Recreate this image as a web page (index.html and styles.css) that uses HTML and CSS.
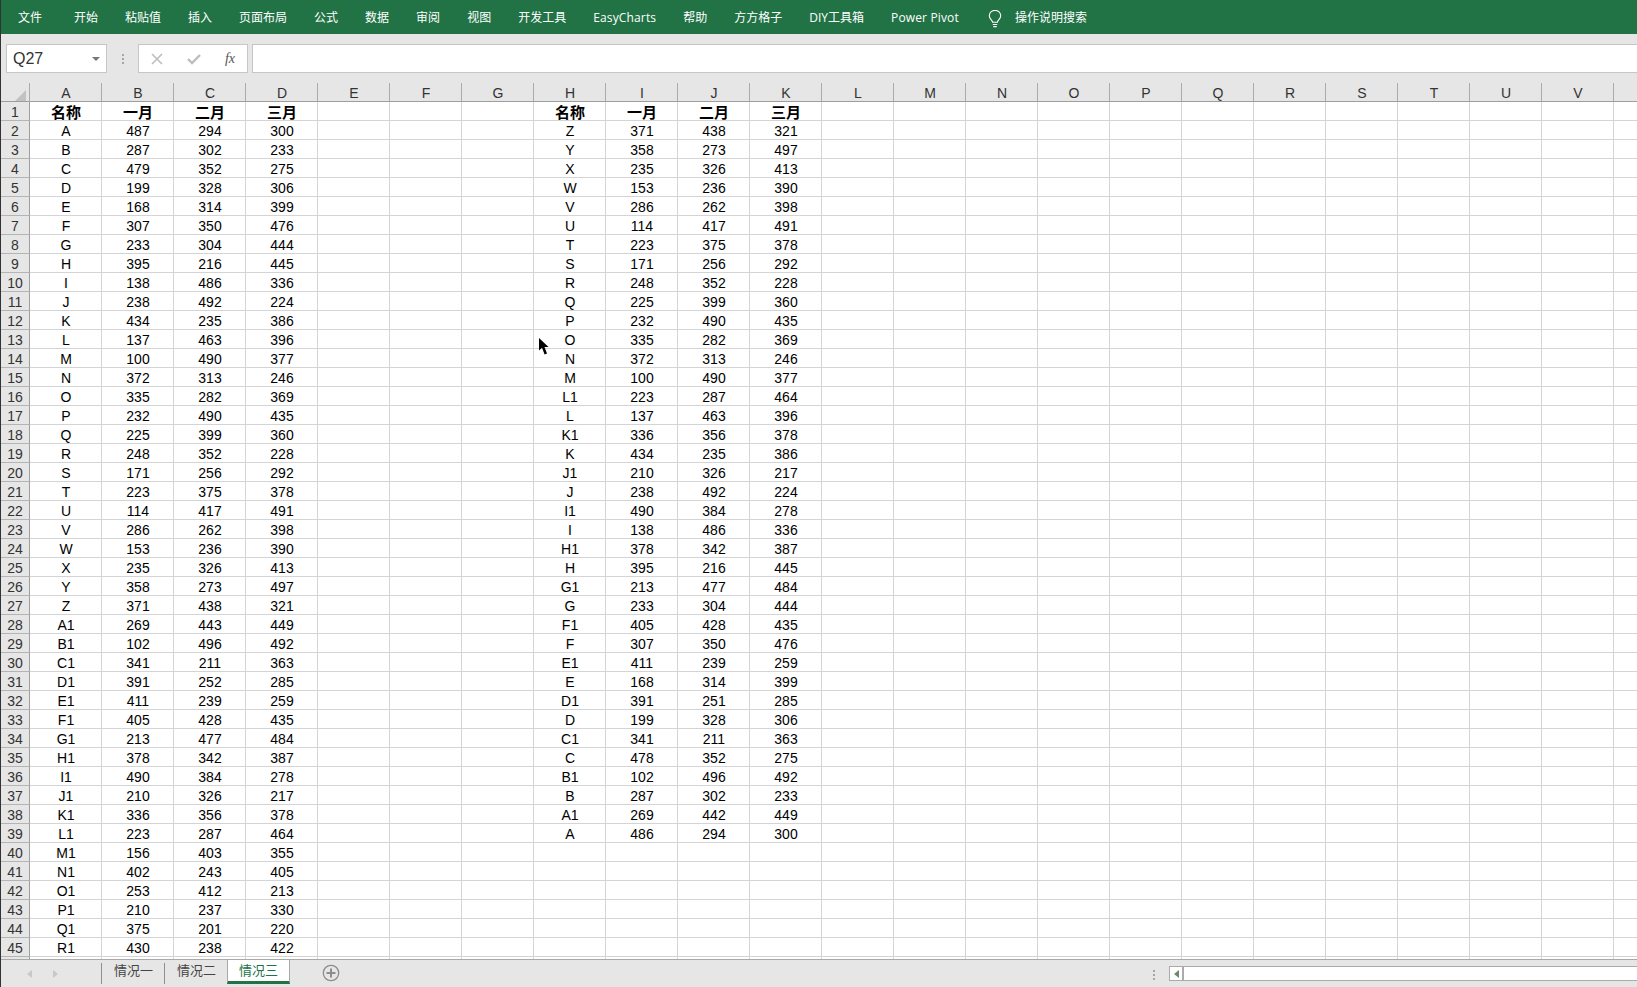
FILE: index.html
```html
<!DOCTYPE html>
<html lang="zh-CN">
<head>
<meta charset="utf-8">
<title>情况三 - Excel</title>
<link rel="stylesheet" href="styles.css">
</head>
<body>
<div class="app">
<nav class="ribbon">
<span class="tab first">文件</span><span class="tab">开始</span><span class="tab">粘贴值</span><span class="tab">插入</span><span class="tab">页面布局</span><span class="tab">公式</span><span class="tab">数据</span><span class="tab">审阅</span><span class="tab">视图</span><span class="tab">开发工具</span><span class="tab latin">EasyCharts</span><span class="tab">帮助</span><span class="tab">方方格子</span><span class="tab">DIY工具箱</span><span class="tab latin">Power Pivot</span>
<span class="tell">
<svg class="bulb" width="14" height="18" viewBox="0 0 14 18" fill="none" stroke="#fff" stroke-width="1.1"><path d="M4.6 12.3c0-2-3.3-3.2-3.3-6.6a5.7 5.3 0 0 1 11.4 0c0 3.400-3.300 4.600-3.300 6.600z"/><path d="M4.800 14.500h4.400M5.300 16.600h3.400"/></svg>
<span>操作说明搜索</span>
</span>
</nav>
<div class="formula">
<div class="namebox"><span>Q27</span><i class="caret"></i></div>
<div class="grip"><i></i><i></i><i></i></div>
<div class="tools">
<svg width="12" height="12" viewBox="0 0 12 12" stroke="#bdbdbd" stroke-width="1.6" fill="none"><path d="M1 1l10 10M11 1L1 11"/></svg>
<svg width="14" height="12" viewBox="0 0 14 12" stroke="#bdbdbd" stroke-width="2.400" fill="none"><path d="M1 6l4 4 8-8"/></svg>
<span class="fx">fx</span>
</div>
<div class="input"></div>
</div>
<div class="sheet">
<div class="colhead">
<div class="corner"><i></i></div>
<div>A</div><div>B</div><div>C</div><div>D</div><div>E</div><div>F</div><div>G</div><div>H</div><div>I</div><div>J</div><div>K</div><div>L</div><div>M</div><div>N</div><div>O</div><div>P</div><div>Q</div><div>R</div><div>S</div><div>T</div><div>U</div><div>V</div>
</div>
<div class="row bold"><b class="rh">1</b><div>名称</div><div>一月</div><div>二月</div><div>三月</div><div class="h">名称</div><div>一月</div><div>二月</div><div>三月</div></div>
<div class="row"><b class="rh">2</b><div>A</div><div>487</div><div>294</div><div>300</div><div class="h">Z</div><div>371</div><div>438</div><div>321</div></div>
<div class="row"><b class="rh">3</b><div>B</div><div>287</div><div>302</div><div>233</div><div class="h">Y</div><div>358</div><div>273</div><div>497</div></div>
<div class="row"><b class="rh">4</b><div>C</div><div>479</div><div>352</div><div>275</div><div class="h">X</div><div>235</div><div>326</div><div>413</div></div>
<div class="row"><b class="rh">5</b><div>D</div><div>199</div><div>328</div><div>306</div><div class="h">W</div><div>153</div><div>236</div><div>390</div></div>
<div class="row"><b class="rh">6</b><div>E</div><div>168</div><div>314</div><div>399</div><div class="h">V</div><div>286</div><div>262</div><div>398</div></div>
<div class="row"><b class="rh">7</b><div>F</div><div>307</div><div>350</div><div>476</div><div class="h">U</div><div>114</div><div>417</div><div>491</div></div>
<div class="row"><b class="rh">8</b><div>G</div><div>233</div><div>304</div><div>444</div><div class="h">T</div><div>223</div><div>375</div><div>378</div></div>
<div class="row"><b class="rh">9</b><div>H</div><div>395</div><div>216</div><div>445</div><div class="h">S</div><div>171</div><div>256</div><div>292</div></div>
<div class="row"><b class="rh">10</b><div>I</div><div>138</div><div>486</div><div>336</div><div class="h">R</div><div>248</div><div>352</div><div>228</div></div>
<div class="row"><b class="rh">11</b><div>J</div><div>238</div><div>492</div><div>224</div><div class="h">Q</div><div>225</div><div>399</div><div>360</div></div>
<div class="row"><b class="rh">12</b><div>K</div><div>434</div><div>235</div><div>386</div><div class="h">P</div><div>232</div><div>490</div><div>435</div></div>
<div class="row"><b class="rh">13</b><div>L</div><div>137</div><div>463</div><div>396</div><div class="h">O</div><div>335</div><div>282</div><div>369</div></div>
<div class="row"><b class="rh">14</b><div>M</div><div>100</div><div>490</div><div>377</div><div class="h">N</div><div>372</div><div>313</div><div>246</div></div>
<div class="row"><b class="rh">15</b><div>N</div><div>372</div><div>313</div><div>246</div><div class="h">M</div><div>100</div><div>490</div><div>377</div></div>
<div class="row"><b class="rh">16</b><div>O</div><div>335</div><div>282</div><div>369</div><div class="h">L1</div><div>223</div><div>287</div><div>464</div></div>
<div class="row"><b class="rh">17</b><div>P</div><div>232</div><div>490</div><div>435</div><div class="h">L</div><div>137</div><div>463</div><div>396</div></div>
<div class="row"><b class="rh">18</b><div>Q</div><div>225</div><div>399</div><div>360</div><div class="h">K1</div><div>336</div><div>356</div><div>378</div></div>
<div class="row"><b class="rh">19</b><div>R</div><div>248</div><div>352</div><div>228</div><div class="h">K</div><div>434</div><div>235</div><div>386</div></div>
<div class="row"><b class="rh">20</b><div>S</div><div>171</div><div>256</div><div>292</div><div class="h">J1</div><div>210</div><div>326</div><div>217</div></div>
<div class="row"><b class="rh">21</b><div>T</div><div>223</div><div>375</div><div>378</div><div class="h">J</div><div>238</div><div>492</div><div>224</div></div>
<div class="row"><b class="rh">22</b><div>U</div><div>114</div><div>417</div><div>491</div><div class="h">I1</div><div>490</div><div>384</div><div>278</div></div>
<div class="row"><b class="rh">23</b><div>V</div><div>286</div><div>262</div><div>398</div><div class="h">I</div><div>138</div><div>486</div><div>336</div></div>
<div class="row"><b class="rh">24</b><div>W</div><div>153</div><div>236</div><div>390</div><div class="h">H1</div><div>378</div><div>342</div><div>387</div></div>
<div class="row"><b class="rh">25</b><div>X</div><div>235</div><div>326</div><div>413</div><div class="h">H</div><div>395</div><div>216</div><div>445</div></div>
<div class="row"><b class="rh">26</b><div>Y</div><div>358</div><div>273</div><div>497</div><div class="h">G1</div><div>213</div><div>477</div><div>484</div></div>
<div class="row"><b class="rh">27</b><div>Z</div><div>371</div><div>438</div><div>321</div><div class="h">G</div><div>233</div><div>304</div><div>444</div></div>
<div class="row"><b class="rh">28</b><div>A1</div><div>269</div><div>443</div><div>449</div><div class="h">F1</div><div>405</div><div>428</div><div>435</div></div>
<div class="row"><b class="rh">29</b><div>B1</div><div>102</div><div>496</div><div>492</div><div class="h">F</div><div>307</div><div>350</div><div>476</div></div>
<div class="row"><b class="rh">30</b><div>C1</div><div>341</div><div>211</div><div>363</div><div class="h">E1</div><div>411</div><div>239</div><div>259</div></div>
<div class="row"><b class="rh">31</b><div>D1</div><div>391</div><div>252</div><div>285</div><div class="h">E</div><div>168</div><div>314</div><div>399</div></div>
<div class="row"><b class="rh">32</b><div>E1</div><div>411</div><div>239</div><div>259</div><div class="h">D1</div><div>391</div><div>251</div><div>285</div></div>
<div class="row"><b class="rh">33</b><div>F1</div><div>405</div><div>428</div><div>435</div><div class="h">D</div><div>199</div><div>328</div><div>306</div></div>
<div class="row"><b class="rh">34</b><div>G1</div><div>213</div><div>477</div><div>484</div><div class="h">C1</div><div>341</div><div>211</div><div>363</div></div>
<div class="row"><b class="rh">35</b><div>H1</div><div>378</div><div>342</div><div>387</div><div class="h">C</div><div>478</div><div>352</div><div>275</div></div>
<div class="row"><b class="rh">36</b><div>I1</div><div>490</div><div>384</div><div>278</div><div class="h">B1</div><div>102</div><div>496</div><div>492</div></div>
<div class="row"><b class="rh">37</b><div>J1</div><div>210</div><div>326</div><div>217</div><div class="h">B</div><div>287</div><div>302</div><div>233</div></div>
<div class="row"><b class="rh">38</b><div>K1</div><div>336</div><div>356</div><div>378</div><div class="h">A1</div><div>269</div><div>442</div><div>449</div></div>
<div class="row"><b class="rh">39</b><div>L1</div><div>223</div><div>287</div><div>464</div><div class="h">A</div><div>486</div><div>294</div><div>300</div></div>
<div class="row"><b class="rh">40</b><div>M1</div><div>156</div><div>403</div><div>355</div></div>
<div class="row"><b class="rh">41</b><div>N1</div><div>402</div><div>243</div><div>405</div></div>
<div class="row"><b class="rh">42</b><div>O1</div><div>253</div><div>412</div><div>213</div></div>
<div class="row"><b class="rh">43</b><div>P1</div><div>210</div><div>237</div><div>330</div></div>
<div class="row"><b class="rh">44</b><div>Q1</div><div>375</div><div>201</div><div>220</div></div>
<div class="row"><b class="rh">45</b><div>R1</div><div>430</div><div>238</div><div>422</div></div>
<div class="row"><b class="rh"></b></div>
<svg class="pointer" width="10" height="17" viewBox="0 0 10 17"><path d="M0 0v12.500l3-2.700 2.600 6.700 2.400-1-2.500-6.500h4z" fill="#000"/></svg>
</div>
<footer class="status">
<div class="nav"><i class="arrow left"></i><i class="arrow right"></i></div>
<div class="sheettab">情况一</div>
<div class="sheettab">情况二</div>
<div class="sheettab active">情况三</div>
<svg class="add" width="18" height="18" viewBox="0 0 18 18" fill="none" stroke="#8c8c8c"><circle cx="9" cy="9" r="7.700" stroke-width="1.300"/><path d="M9 4.500v9M4.500 9h9" stroke-width="2"/></svg>
<div class="grip status-grip"><i></i><i></i><i></i></div>
<div class="scroll"><div class="scrollbtn"><i></i></div><div class="scrolltrack"></div></div>
</footer>
</div>
</body>
</html>
```
FILE: styles.css
```css
* { box-sizing: border-box; }
html, body { margin: 0; height: 100%; overflow: hidden; }
body { font-family: "Liberation Sans", "Noto Sans CJK SC", sans-serif; background: #e6e6e6; }
.app { width: 1637px; height: 987px; display: flex; flex-direction: column; border-left: 1px solid #333; overflow: hidden; }

.ribbon { height: 34px; flex: none; background: #217346; color: #fff; display: flex; align-items: center; gap: 27px; padding: 2px 0 0 17px; font: 12px/32px "Open Sans", "Noto Sans CJK SC", sans-serif; white-space: nowrap; }
.tab.first { margin-right: 5px; }
.latin { letter-spacing: .15px; }
.tell { display: flex; align-items: center; gap: 13px; margin-left: 2px; }
.bulb { margin-top: 2px; }

.formula { height: 39px; flex: none; padding-top: 10px; display: flex; align-items: flex-start; background: #e6e6e6; }
.namebox { width: 101px; height: 29px; margin-left: 5px; background: #fff; border: 1px solid #c6c6c6; display: flex; align-items: center; justify-content: space-between; padding: 0 6px; font-size: 16px; color: #333; }
.caret { width: 0; height: 0; border: 4px solid transparent; border-top: 4px solid #777; border-bottom: 0; }
.grip { width: 31px; height: 29px; display: flex; flex-direction: column; align-items: center; justify-content: center; gap: 2px; }
.grip i { width: 2px; height: 2px; background: #a6a6a6; display: block; }
.tools { width: 110px; height: 29px; background: #fff; border: 1px solid #c6c6c6; display: flex; align-items: center; justify-content: space-between; padding: 0 12px 0 12px; }
.fx { font: italic 400 14px "Liberation Serif", serif; color: #555; }
.input { flex: 1; height: 29px; margin-left: 4px; background: #fff; border: 1px solid #c6c6c6; border-right: 0; }

.sheet { flex: 1; min-height: 0; overflow: hidden; position: relative; background: #fff; }
.colhead, .row { display: grid; grid-template-columns: 29px repeat(22, 72px) 1fr; text-align: center; }
.colhead { height: 29px; padding-top: 10px; background: linear-gradient(90deg, transparent 71px, #ababab 71px) 29px 10px / 72px 19px repeat-x #e6e6e6; border-bottom: 1px solid #9e9e9e; font-size: 14px; line-height: 21px; color: #333; }
.corner { border-right: 1px solid #ababab; display: flex; justify-content: flex-end; align-items: flex-end; padding: 0 3px 3px 0; }
.corner i { width: 11px; height: 11px; background: #c2c2c2; clip-path: polygon(100% 0, 100% 100%, 0 100%); display: block; }

.row { height: 19px; font-size: 14px; line-height: 21px; color: #000; border-bottom: 1px solid #d4d4d4; background: linear-gradient(90deg, transparent 71px, #d4d4d4 71px) 29px 0 / 72px 100% repeat-x #fff; }
.row.bold { font-size: 15px; font-weight: 700; }
.rh { height: 19px; background: #e6e6e6; color: #333; font-weight: 400; font-size: 14px; border-right: 1px solid #9e9e9e; border-bottom: 1px solid #b4b4b4; }
.h { grid-column-start: 9; }
.pointer { position: absolute; left: 538px; top: 265px; }

.status { height: 28px; flex: none; background: #e6e6e6; border-top: 1px solid #a9a9a9; display: flex; align-items: flex-start; margin-top: -1px; position: relative; color: #444; font-size: 13px; }
.nav { width: 100px; height: 26px; display: flex; align-items: center; gap: 21px; padding: 0 0 0 26px; }
.arrow { width: 0; height: 0; border: 4px solid transparent; border-left-width: 0; border-right: 5px solid #c8c8c8; display: block; margin-top: 2px; }
.arrow.right { border-right-width: 0; border-left: 5px solid #c8c8c8; margin-left: 0; }
.sheettab { width: 63px; height: 21px; margin-top: 3px; border-left: 1px solid #8f8f8f; padding-left: 12px; line-height: 16px; }
.sheettab.active { width: 63px; height: 25px; margin-top: -1px; background: #fff; color: #217346; border: 1px solid #a9a9a9; border-top-color: #a9a9a9; border-bottom: 3px solid #217346; line-height: 22px; padding-left: 11px; }
.add { margin: 4px 0 0 32px; }
.status-grip { width: 31px; height: 20px; margin: 5px 0 0 798px; }
.scroll { flex: 1; height: 15px; margin: 6px 0 0 0; background: #fff; border: 1px solid #ababab; border-right: 0; display: flex; }
.scrollbtn { width: 14px; border-right: 2px solid #ababab; display: flex; align-items: center; justify-content: center; }
.scrollbtn i { width: 0; height: 0; border: 4px solid transparent; border-left: 0; border-right: 5px solid #6d8a6f; display: block; }
.scrolltrack { flex: 1; }
```
